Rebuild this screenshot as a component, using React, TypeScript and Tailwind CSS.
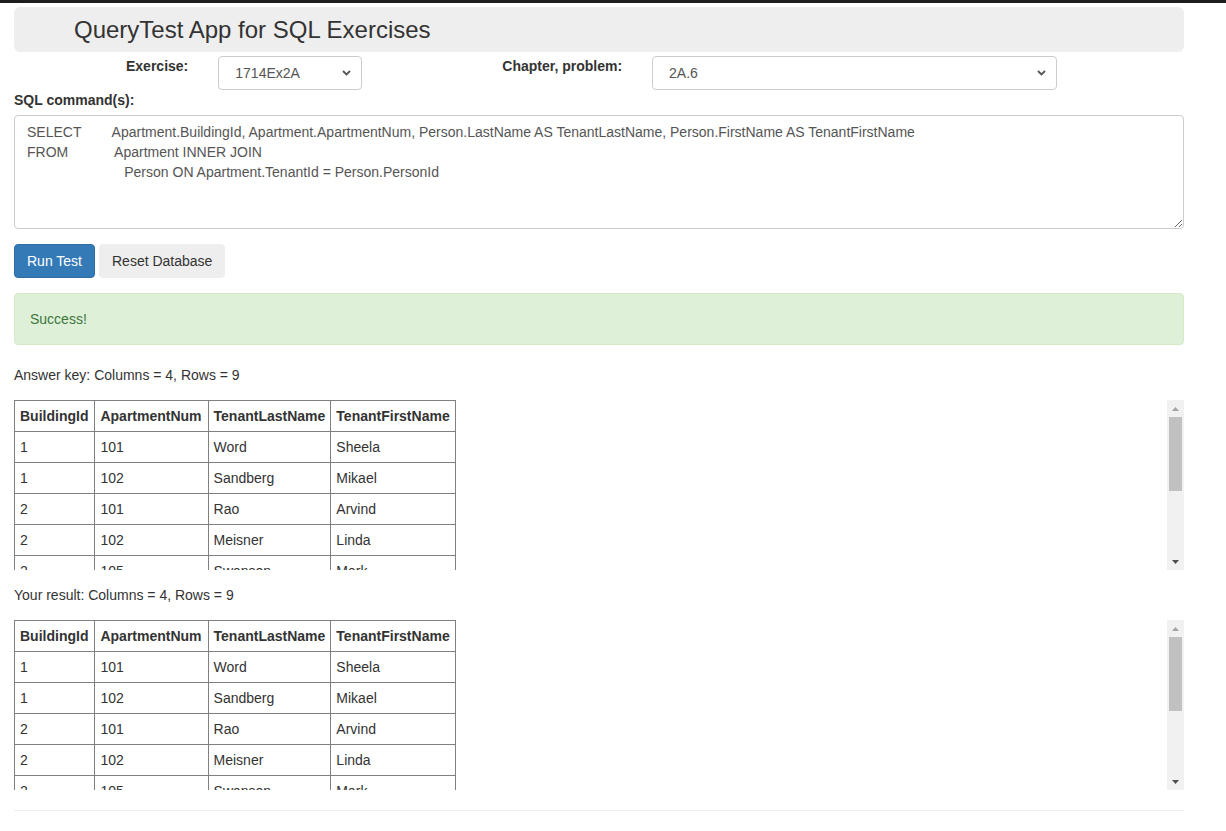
import React from 'react';

type Row = [string, string, string, string];

const rows: Row[] = [
  ['1', '101', 'Word', 'Sheela'],
  ['1', '102', 'Sandberg', 'Mikael'],
  ['2', '101', 'Rao', 'Arvind'],
  ['2', '102', 'Meisner', 'Linda'],
  ['2', '105', 'Swanson', 'Mark'],
  ['3', '101', 'Wang', 'Ying'],
  ['3', '102', 'Oakley', 'Sam'],
  ['3', '105', 'Garcia', 'Ana'],
  ['4', '101', 'Chen', 'Wei'],
];

const heads = ['BuildingId', 'ApartmentNum', 'TenantLastName', 'TenantFirstName'];

const Chevron = () => (
  <svg width="9" height="6" viewBox="0 0 9 6" className="pointer-events-none absolute right-[11px] top-[14px]">
    <path d="M1 1 L4.5 4.5 L8 1" fill="none" stroke="#555" strokeWidth="1.8" />
  </svg>
);

// fake classic scrollbar beside the table area
const ScrollBar = () => (
  <div className="flex w-[17px] shrink-0 flex-col bg-[#f1f1f1]">
    <div className="flex h-[17px] items-center justify-center">
      <svg width="7" height="4" viewBox="0 0 7 4">
        <path d="M0 4 L3.5 0 L7 4 Z" fill="#a3a3a3" />
      </svg>
    </div>
    <div className="mx-[2px] h-[74px] bg-[#c1c1c1]" />
    <div className="flex-1" />
    <div className="flex h-[17px] items-center justify-center">
      <svg width="7" height="4" viewBox="0 0 7 4">
        <path d="M0 0 L3.5 4 L7 0 Z" fill="#505050" />
      </svg>
    </div>
  </div>
);

const ResultTable: React.FC = () => (
  <div className="flex h-[170px]">
    <div className="flex-1 overflow-hidden">
      <table className="border-collapse text-[14px] leading-[20px] text-[#333]">
        <thead>
          <tr>
            {heads.map((h, j) => (
              <th
                key={h}
                className={
                  j < 2
                    ? 'border border-[#808080] py-[5px] pl-[5px] pr-[6px] text-left font-bold'
                    : 'border border-[#808080] px-[5px] py-[5px] text-left font-bold'
                }
              >
                {h}
              </th>
            ))}
          </tr>
        </thead>
        <tbody>
          {rows.map((r, i) => (
            <tr key={i}>
              {r.map((c, j) => (
                <td key={j} className="border border-[#808080] px-[5px] py-[5px]">
                  {c}
                </td>
              ))}
            </tr>
          ))}
        </tbody>
      </table>
    </div>
    <ScrollBar />
  </div>
);

const App: React.FC = () => {
  return (
    <div className="min-h-[831px] bg-white text-[14px] leading-[20px] text-[#333]" style={{ fontFamily: '"Liberation Sans", Arial, sans-serif' }}>
      <div className="h-[3px] bg-[#1e1e1e]" />
      <div className="ml-[14px] w-[1170px] pt-[4px]">
        <div className="flex h-[45px] items-center rounded-[6px] bg-[#eeeeee] pl-[60px]">
          <h1 className="text-[24px] leading-[28px] font-normal text-[#333]">QueryTest App for SQL Exercises</h1>
        </div>

        <div className="mt-[4px] flex items-start">
          <span className="ml-[112px] font-bold">Exercise:</span>
          <div className="relative ml-[30px]">
            <select className="h-[34px] w-[144px] appearance-none rounded-[4px] border border-[#ccc] bg-white pl-[16px] text-[14px] text-[#555]">
              <option>1714Ex2A</option>
            </select>
            <Chevron />
          </div>
          <span className="ml-[140px] font-bold">Chapter, problem:</span>
          <div className="relative ml-[30px]">
            <select className="h-[34px] w-[405px] appearance-none rounded-[4px] border border-[#ccc] bg-white pl-[16px] text-[14px] text-[#555]">
              <option>2A.6</option>
            </select>
            <Chevron />
          </div>
        </div>

        <div className="font-bold">SQL command(s):</div>
        <textarea
          className="mt-[5px] block h-[114px] w-full resize-y whitespace-pre rounded-[4px] border border-[#ccc] px-[12px] py-[6px] text-[14px] leading-[20px] text-[#555]"
          defaultValue={
            'SELECT        Apartment.BuildingId, Apartment.ApartmentNum, Person.LastName AS TenantLastName, Person.FirstName AS TenantFirstName\nFROM            Apartment INNER JOIN\n                         Person ON Apartment.TenantId = Person.PersonId'
          }
        />

        <div className="mt-[15px] flex gap-[4px]">
          <button className="h-[34px] rounded-[4px] border border-[#2e6da4] bg-[#337ab7] px-[12px] text-white">Run Test</button>
          <button className="h-[34px] rounded-[4px] border border-[#eeeeee] bg-[#eeeeee] px-[12px] text-[#333]">Reset Database</button>
        </div>

        <div className="mt-[15px] h-[52px] rounded-[4px] border border-[#d6e9c6] bg-[#dff0d8] px-[15px] py-[15px] text-[#3c763d]">Success!</div>

        <div className="mt-[20px] mb-[15px]">Answer key: Columns = 4, Rows = 9</div>
        <ResultTable />

        <div className="mt-[15px] mb-[15px]">Your result: Columns = 4, Rows = 9</div>
        <ResultTable />

        <hr className="mt-[20px] border-t border-[#eeeeee]" />
      </div>
    </div>
  );
};

export default App;
